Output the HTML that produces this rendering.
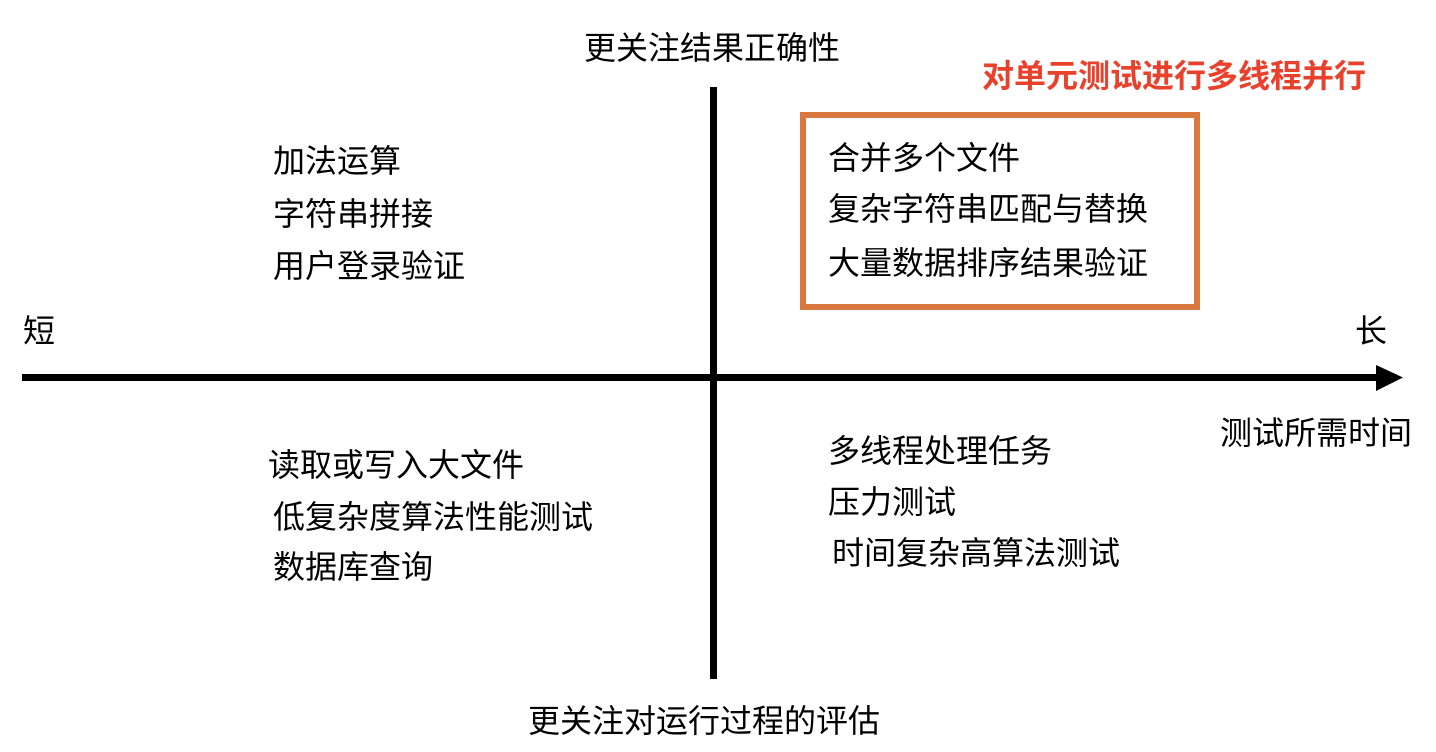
<!DOCTYPE html>
<html><head><meta charset="utf-8"><style>
body{margin:0;width:1436px;height:752px;background:#fff;position:relative;overflow:hidden;font-family:"Liberation Sans","Noto Sans CJK SC",sans-serif;}
.t{position:absolute;font-size:32px;line-height:34px;color:#000;white-space:nowrap;}
</style></head><body>
<div style="position:absolute;left:22px;top:374px;width:1362px;height:7px;background:#000"></div>
<svg style="position:absolute;left:1376px;top:364px" width="30" height="28"><polygon points="0,1 27,13.5 0,27" fill="#000"/></svg>
<div style="position:absolute;left:710px;top:87px;width:7px;height:592px;background:#000"></div>
<div style="position:absolute;left:800px;top:112px;width:388px;height:186px;border:6px solid #d9773f"></div>
<div class="t" style="left:584px;top:31px">更关注结果正确性</div>
<div class="t" style="left:982px;top:59px;color:#e8412c;font-weight:bold">对单元测试进行多线程并行</div>
<div class="t" style="left:273px;top:144px">加法运算</div>
<div class="t" style="left:273px;top:197px">字符串拼接</div>
<div class="t" style="left:273px;top:249px">用户登录验证</div>
<div class="t" style="left:23px;top:314px">短</div>
<div class="t" style="left:1355px;top:314px">长</div>
<div class="t" style="left:1220px;top:416px">测试所需时间</div>
<div class="t" style="left:268px;top:448px">读取或写入大文件</div>
<div class="t" style="left:273px;top:500px">低复杂度算法性能测试</div>
<div class="t" style="left:273px;top:550px">数据库查询</div>
<div class="t" style="left:828px;top:434px">多线程处理任务</div>
<div class="t" style="left:828px;top:485px">压力测试</div>
<div class="t" style="left:832px;top:536px">时间复杂高算法测试</div>
<div class="t" style="left:828px;top:141px">合并多个文件</div>
<div class="t" style="left:828px;top:192px">复杂字符串匹配与替换</div>
<div class="t" style="left:828px;top:246px">大量数据排序结果验证</div>
<div class="t" style="left:528px;top:704px">更关注对运行过程的评估</div>
</body></html>
